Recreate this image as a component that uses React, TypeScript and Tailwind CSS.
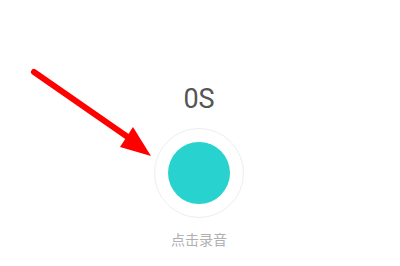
import React from "react";

export default function App() {
  return (
    <div className="relative w-[400px] h-[266px] bg-white overflow-hidden" style={{ fontFamily: "Roboto, 'Noto Sans CJK SC', sans-serif" }}>
      <div className="flex flex-col items-center pt-[84px]">
        <div className="text-[27px] leading-[30px] text-[#555555] mr-[2px]" style={{ fontFamily: "Roboto, sans-serif" }}>0S</div>
        <div className="mt-[14px] w-[90px] h-[90px] rounded-full border border-[#eeeeee] flex items-center justify-center mr-[2px]">
          <div className="w-[62px] h-[62px] rounded-full bg-[#28d3cf]" />
        </div>
        <div className="mt-[12px] text-[14px] leading-[18px] text-[#b0b0b0] mr-[2px]" style={{ fontFamily: "'Noto Sans CJK SC', sans-serif" }}>点击录音</div>
      </div>
      <svg className="absolute left-0 top-0" width="400" height="266" viewBox="0 0 400 266">
        <line x1="34" y1="72" x2="132" y2="140" stroke="#ff0000" strokeWidth="6" strokeLinecap="round" />
        <polygon points="133,127 120,147 151,156" fill="#ff0000" />
      </svg>
    </div>
  );
}
